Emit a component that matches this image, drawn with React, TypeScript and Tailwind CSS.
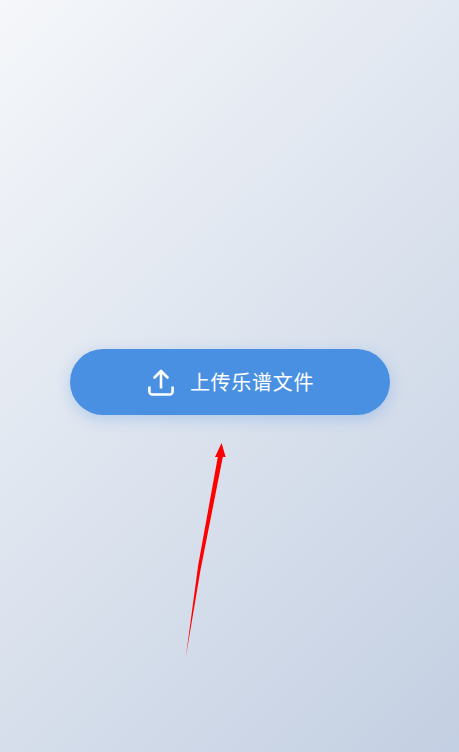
export default function App() {
  return (
    <div className="relative flex h-[752px] w-full items-center justify-center overflow-hidden bg-[linear-gradient(135deg,#f5f7fa_0%,#c3cfe2_100%)] pt-[12px] font-['Noto_Sans_CJK_SC','Noto_Sans',sans-serif]">
      <button className="flex h-[66px] w-[320px] items-center justify-center gap-[16px] rounded-[33px] bg-[#4a90e2] pl-[3px] text-[20px] tracking-[0.7px] text-white shadow-[0_4px_15px_rgba(74,144,226,0.3)]">
        <svg width="26" height="28" viewBox="0 0 26 28" fill="none" stroke="white" strokeWidth="2.6" strokeLinejoin="round">
          <path d="M13 20.5V3" />
          <path d="M6.5 9.5 13 3 19.5 9.5" strokeLinecap="round" />
          <path d="M1.4 18.5v5a3 3 0 0 0 3 3h17.2a3 3 0 0 0 3-3v-5" strokeLinecap="butt" />
        </svg>
        <span>上传乐谱文件</span>
      </button>
      <svg className="absolute left-0 top-0" width="459" height="752" viewBox="0 0 459 752">
        <polygon points="221.6,443 225.6,457 222.8,457 200.5,570 185.8,657 198.2,565 217.8,457 215,457" fill="#ff0000" />
      </svg>
    </div>
  );
}
